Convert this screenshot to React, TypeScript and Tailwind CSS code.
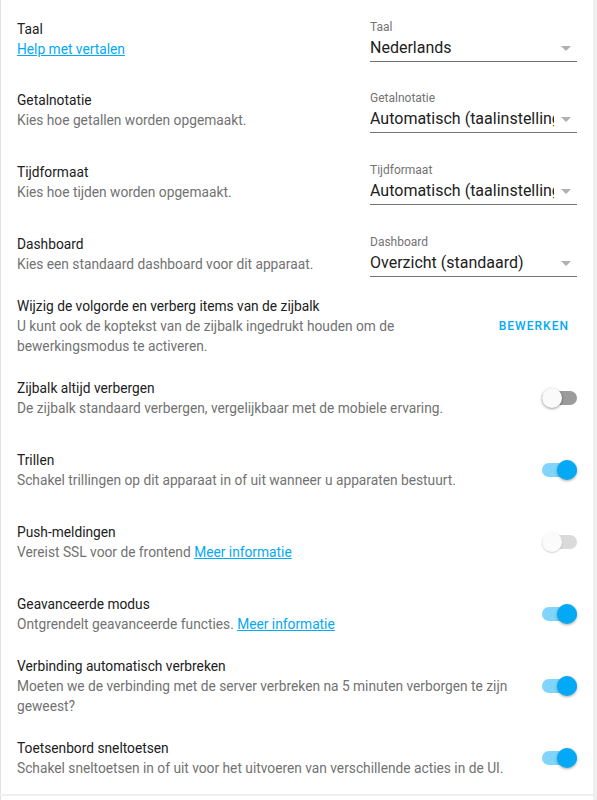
import React from "react";

const font = { fontFamily: "Roboto, 'Noto Sans', sans-serif" };

function Arrow() {
  return (
    <svg width="24" height="24" viewBox="0 0 24 24" className="shrink-0">
      <path d="M7 10l5 5 5-5z" fill="#b0b0b0" />
    </svg>
  );
}

function Dropdown({ label, value }: { label: string; value: string }) {
  return (
    <div className="w-[207px] shrink-0 border-b border-[#737373] pb-[1px] translate-y-[1px]">
      <div className="text-[12px] leading-[16px] text-[#737373]">{label}</div>
      <div className="flex items-center h-[24px] mt-[1px]">
        <div className="flex-1 overflow-hidden whitespace-nowrap text-[16px] leading-[24px] text-[#212121]">
          {value}
        </div>
        <div className="-mr-[1px]">
          <Arrow />
        </div>
      </div>
    </div>
  );
}

function Toggle({ on, disabled }: { on?: boolean; disabled?: boolean }) {
  const track = on ? "bg-[#81d4fa]" : disabled ? "bg-[#dadada]" : "bg-[#9b9b9b]";
  const thumb = on
    ? "bg-[#03a9f4] left-[16px] shadow-[0_1px_3px_rgba(0,0,0,0.35)]"
    : disabled
    ? "bg-[#fbfbfb] left-[1px] shadow-[0_1px_2px_rgba(0,0,0,0.18)]"
    : "bg-[#fafafa] left-[1px] shadow-[0_1px_3px_rgba(0,0,0,0.4)]";
  return (
    <div className="relative w-[36px] h-[20px] shrink-0">
      <div className={`absolute left-[1px] right-0 top-[3px] h-[14px] rounded-full ${track}`} />
      <div className={`absolute top-0 w-[20px] h-[20px] rounded-full ${thumb}`} />
    </div>
  );
}

function Row({
  title,
  children,
  right,
  h = "h-[72px]",
}: {
  title: string;
  children: React.ReactNode;
  right: React.ReactNode;
  h?: string;
}) {
  return (
    <div className={`flex items-center ${h} px-4`}>
      <div className="flex-1 min-w-0">
        <div className="text-[13.75px] leading-[20px] text-[#212121]">{title}</div>
        <div className="text-[13.75px] leading-[20px] text-[#727272]">{children}</div>
      </div>
      {right}
    </div>
  );
}

const Link = ({ children }: { children: React.ReactNode }) => (
  <a className="text-[#03a9f4] underline">{children}</a>
);

export default function App() {
  return (
    <div style={font} className="w-[597px] h-[800px] overflow-hidden bg-[#efefef]">
      <div className="w-[593px] h-[794px] bg-white border-l border-[#e2e2e2] pt-[4px]">
        <Row h="h-[70px]" title="Taal" right={<Dropdown label="Taal" value="Nederlands" />}>
          <Link>Help met vertalen</Link>
        </Row>
        <Row
          title="Getalnotatie"
          right={<Dropdown label="Getalnotatie" value="Automatisch (taalinstelling)" />}
        >
          Kies hoe getallen worden opgemaakt.
        </Row>
        <Row
          title="Tijdformaat"
          right={<Dropdown label="Tijdformaat" value="Automatisch (taalinstelling)" />}
        >
          Kies hoe tijden worden opgemaakt.
        </Row>
        <Row
          title="Dashboard"
          right={<Dropdown label="Dashboard" value="Overzicht (standaard)" />}
        >
          Kies een standaard dashboard voor dit apparaat.
        </Row>
        <Row
          title="Wijzig de volgorde en verberg items van de zijbalk"
          right={
            <button className="px-2 text-[12px] leading-[36px] font-medium tracking-[0.085em] text-[#03a9f4]">
              BEWERKEN
            </button>
          }
        >
          U kunt ook de koptekst van de zijbalk ingedrukt houden om de
          <br />
          bewerkingsmodus te activeren.
        </Row>
        <Row title="Zijbalk altijd verbergen" right={<Toggle />}>
          De zijbalk standaard verbergen, vergelijkbaar met de mobiele ervaring.
        </Row>
        <Row title="Trillen" right={<Toggle on />}>
          Schakel trillingen op dit apparaat in of uit wanneer u apparaten bestuurt.
        </Row>
        <Row title="Push-meldingen" right={<Toggle disabled />}>
          Vereist SSL voor de frontend <Link>Meer informatie</Link>
        </Row>
        <Row title="Geavanceerde modus" right={<Toggle on />}>
          Ontgrendelt geavanceerde functies. <Link>Meer informatie</Link>
        </Row>
        <Row title="Verbinding automatisch verbreken" right={<Toggle on />}>
          Moeten we de verbinding met de server verbreken na 5 minuten verborgen te zijn
          <br />
          geweest?
        </Row>
        <Row title="Toetsenbord sneltoetsen" right={<Toggle on />}>
          Schakel sneltoetsen in of uit voor het uitvoeren van verschillende acties in de UI.
        </Row>
      </div>
      <div className="w-[593px] h-[10px] mt-[2px] bg-white border-l border-[#e2e2e2]" />
    </div>
  );
}
